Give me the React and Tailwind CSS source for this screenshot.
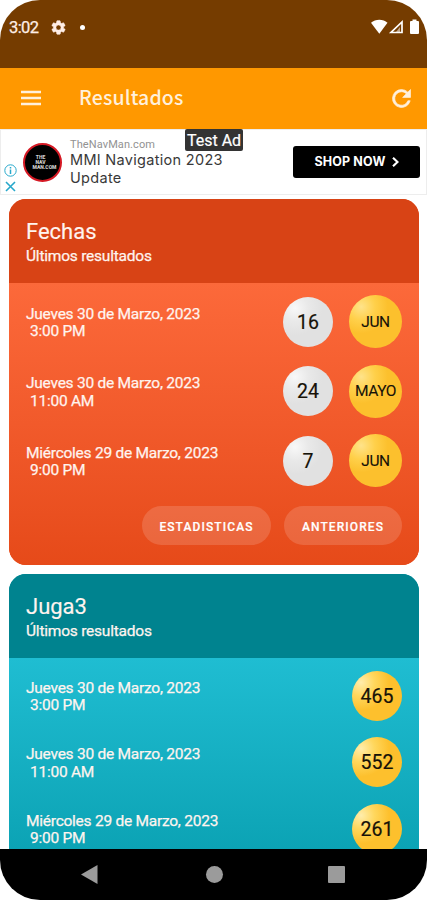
import { clsx } from 'clsx';

const DRAWS = [
    { date: 'Jueves 30 de Marzo, 2023', time: '3:00 PM', number: '16', month: 'JUN', juga: '465' },
    { date: 'Jueves 30 de Marzo, 2023', time: '11:00 AM', number: '24', month: 'MAYO', juga: '552' },
    { date: 'Miércoles 29 de Marzo, 2023', time: '9:00 PM', number: '7', month: 'JUN', juga: '261' },
];

const StatusBar = () => (
    <div className="flex h-[68px] shrink-0 items-start justify-between bg-[#753c00] pl-[9px] pr-[7px] pt-[18px] text-[#ffeee6]">
        <div className="flex h-[19px] items-center">
            <span className="w-[40px] text-[16.5px] leading-[19px] tracking-[-0.6px] [-webkit-text-stroke:0.25px_#ffeee6]">3:02</span>
            <svg className="ml-[1px] h-[17px] w-[17px]" viewBox="0 0 24 24" fill="currentColor">
                <path d="M19.14 12.94c.04-.3.06-.61.06-.94s-.02-.64-.07-.94l2.03-1.58a.49.49 0 0 0 .12-.61l-1.92-3.32a.49.49 0 0 0-.59-.22l-2.39.96a7 7 0 0 0-1.62-.94l-.36-2.54a.48.48 0 0 0-.48-.41h-3.84a.48.48 0 0 0-.47.41l-.36 2.54a7 7 0 0 0-1.62.94l-2.39-.96a.48.48 0 0 0-.59.22L2.74 8.87a.48.48 0 0 0 .12.61l2.03 1.58a6 6 0 0 0 0 1.88l-2.03 1.58a.49.49 0 0 0-.12.61l1.92 3.32c.12.22.37.29.59.22l2.39-.96c.5.38 1.03.7 1.62.94l.36 2.54c.05.24.24.41.48.41h3.84c.24 0 .44-.17.47-.41l.36-2.54a7 7 0 0 0 1.62-.94l2.39.96c.22.08.47 0 .59-.22l1.92-3.32a.48.48 0 0 0-.12-.61zM12 15.6a3.6 3.6 0 1 1 0-7.2 3.6 3.6 0 0 1 0 7.2z" stroke="currentColor" strokeWidth=".8" />
            </svg>
            <span className="ml-[13px] h-[5px] w-[5px] rounded-full bg-white" />
        </div>
        <svg className="h-[19px] w-[50px]" viewBox="0 0 50 19" fill="#fff">
            <path d="M1 4.8C5.5.6 13.200.6 17.500 4.800L9.300 15.800z" />
            <path d="M32 4v10.500H21z" fill="none" stroke="#fff" strokeWidth="1.7" />
            <path d="M30 9v5h-4z" opacity=".55" />
            <path d="M42.5 3V1.600h4V3H48q1 0 1 1v11q0 1-1 1h-7q-1 0-1-1V4q0-1 1-1z" />
        </svg>
    </div>
);

const AppBar = () => (
    <div className="flex h-[61px] shrink-0 items-center bg-[#ff9800] pl-[21px] pr-[12px] text-[#fff0dc]">
        <svg className="mb-[2px] h-[16px] w-[20px]" viewBox="0 0 20 16" stroke="currentColor" strokeWidth="2.6">
            <path d="M0 2h20M0 8h20M0 14h20" />
        </svg>
        <h1 className="mb-[4px] ml-[38px] flex-1 font-['Noto_Sans_CJK_JP','Noto_Sans',sans-serif] text-[19.5px] font-medium leading-7 tracking-[0.15px]">Resultados</h1>
        <svg className="mb-[1px] h-[27px] w-[27px]" viewBox="0 0 24 24" fill="currentColor">
            <path d="M17.65 6.35A7.96 7.96 0 0 0 12 4a8 8 0 1 0 7.73 10h-2.08A6 6 0 1 1 12 6c1.66 0 3.14.69 4.22 1.78L13 11h7V4z" stroke="currentColor" strokeWidth=".6" />
        </svg>
    </div>
);

const AdBanner = () => (
    <div className="relative flex h-[66px] shrink-0 border border-[#ededed] bg-white">
        <div className="flex w-[21px] flex-col items-center gap-[4px] pr-[3px] pt-[34px] text-[#27a8cb]">
            <svg className="h-[13px] w-[13px] shrink-0" viewBox="0 0 13 13" fill="none" stroke="currentColor">
                <circle cx="6.5" cy="6.5" r="5.7" />
                <path d="M6.5 3v1.6M6.5 5.500v4.500" strokeWidth="1.5" />
            </svg>
            <svg className="h-[11px] w-[11px] shrink-0" viewBox="0 0 11 11" stroke="currentColor" strokeWidth="1.6">
                <path d="M1 1l9 9M10 1l-9 9" />
            </svg>
        </div>
        <div className="ml-px mt-[13px] flex h-[39px] w-[39px] flex-col items-center justify-center rounded-full border-2 border-[#d51924] bg-black text-[5px] font-black leading-[5px] text-[#ccc]">
            <span className="-ml-1">THE</span>
            <span className="-ml-1">NAV</span>
            <span className="ml-1">MAN.COM</span>
        </div>
        <div className="ml-[8px] flex-1 pt-[8px] font-['Inter',sans-serif]">
            <p className="font-['Roboto',sans-serif] text-[11px] leading-[13px] tracking-[0.1px] text-[#929292]">TheNavMan.com</p>
            <p className="w-[170px] text-[14.5px] leading-[18px] tracking-[0.3px] text-[#393939]">MMI Navigation 2023 Update</p>
        </div>
        <div className="mr-[6px] mt-[16px] flex h-[32px] w-[127px] items-center justify-center gap-[6px] rounded-[3px] bg-black font-['Inter',sans-serif] text-[12.5px] font-bold text-white">
            <span className="tracking-[0.15px]">SHOP NOW</span>
            <svg className="h-[10px] w-[7px]" viewBox="0 0 7 10" fill="none" stroke="currentColor" strokeWidth="2.2">
                <path d="M1 .8 5.5 5 1 9.200" />
            </svg>
        </div>
        <span className="absolute left-[184px] top-[-1px] h-[22px] w-[58px] rounded-[2px] bg-[#333] text-center text-[16px] leading-[24px] text-white [-webkit-text-stroke:0.2px_#fff]">Test Ad</span>
    </div>
);

const Ball = ({ children, variant }) => (
    <span
        className={clsx(
            'flex shrink-0 items-center justify-center rounded-full pt-[2px] text-[#161208]',
            variant === 'white' && 'h-[50px] w-[50px] bg-[radial-gradient(circle_at_24%_22%,#f8f8f8_0%,#e9e9e9_25%,#e1e1e1_50%)] text-[19.5px] [-webkit-text-stroke:0.2px_#161208]',
            variant === 'month' && 'h-[53px] w-[53px] bg-[radial-gradient(circle_at_23%_22%,#ffe38a_0%,#ffd04a_24%,#fcc02d_46%)] text-[15.5px] tracking-[-0.4px] [-webkit-text-stroke:0.1px_#161208]',
            variant === 'yellow' && 'h-[50px] w-[50px] bg-[radial-gradient(circle_at_18%_23%,#ffedac_0%,#ffd75d_24%,#fdc02d_50%)] text-[19.5px] [-webkit-text-stroke:0.2px_#161208]'
        )}
    >
        {children}
    </span>
);

const CardHeader = ({ title, className }) => (
    <div className={clsx('h-[84px] pl-[17px] pt-[20px] text-[#fff4ef]', className)}>
        <h2 className="text-[22px] leading-[26px] [-webkit-text-stroke:0.15px_#fff4ef]">{title}</h2>
        <p className="text-[15.5px] leading-[22px] tracking-[-0.22px] [-webkit-text-stroke:0.25px_#fff4ef]">Últimos resultados</p>
    </div>
);

const DrawLabel = ({ draw }) => (
    <div className="flex-1 pt-[3px] text-[15.5px] leading-[17.5px] tracking-[-0.25px] text-[#fff4ef] [-webkit-text-stroke:0.25px_#fff4ef]">
        <p>{draw.date}</p>
        <p className="pl-[4px]">{draw.time}</p>
    </div>
);

const App = () => (
    <div className="h-[900px] w-[427px] overflow-hidden bg-white font-['Roboto',sans-serif]">
        <div className="flex h-full flex-col overflow-hidden rounded-[40px] bg-white">
            <StatusBar />
            <AppBar />
            <AdBanner />

            <main className="flex min-h-0 flex-1 flex-col gap-[9px] overflow-hidden pl-[9px] pr-[8px] pt-[3.5px]">
                {/* Fechas */}
                <section className="h-[366px] shrink-0 overflow-hidden rounded-[17px] bg-[#e94c1c]">
                    <CardHeader title="Fechas" className="bg-[#d84315]" />
                    <div className="h-[282px] bg-linear-to-b from-[#fc693a] to-[#e64a19] px-[17px] pt-[12.5px]">
                        <div className="flex flex-col gap-[16.5px]">
                            {DRAWS.map((draw, i) => (
                                <div key={i} className="flex h-[53px] items-center">
                                    <DrawLabel draw={draw} />
                                    <Ball variant="white">{draw.number}</Ball>
                                    <span className="w-[16px]" />
                                    <Ball variant="month">{draw.month}</Ball>
                                </div>
                            ))}
                        </div>
                        <div className="mt-[19px] flex justify-end gap-[13px] text-[12px] font-medium text-white [-webkit-text-stroke:0.2px_#fff]">
                            <button className="h-[39px] w-[129px] rounded-full bg-white/15 pt-[2px] tracking-[1.1px]">ESTADISTICAS</button>
                            <button className="h-[39px] w-[118px] rounded-full bg-white/15 pt-[2px] tracking-[1.1px]">ANTERIORES</button>
                        </div>
                    </div>
                </section>

                {/* Juga3 */}
                <section className="h-[366px] shrink-0 overflow-hidden rounded-[17px] bg-[#0097a7]">
                    <CardHeader title="Juga3" className="bg-[#00838f]" />
                    <div className="flex h-[282px] flex-col gap-[16.5px] bg-linear-to-b from-[#1fbdd2] to-[#0097a7] px-[17px] pt-[13px]">
                        {DRAWS.map((draw, i) => (
                            <div key={i} className="flex h-[50px] items-center">
                                <DrawLabel draw={draw} />
                                <Ball variant="yellow">{draw.juga}</Ball>
                            </div>
                        ))}
                    </div>
                </section>
            </main>

            <nav className="flex h-[51px] shrink-0 items-center bg-black text-[#9b9b9b]">
                <svg className="ml-[81px] h-[19px] w-[17px]" viewBox="0 0 17 19" fill="currentColor">
                    <path d="M0 9.5 16.5 0v19z" />
                </svg>
                <span className="ml-[108px] h-[17px] w-[17px] rounded-full bg-[#9b9b9b]" />
                <span className="ml-[105px] h-[17px] w-[17px] rounded-[1px] bg-[#9b9b9b]" />
            </nav>
        </div>
    </div>
);

export default App;
